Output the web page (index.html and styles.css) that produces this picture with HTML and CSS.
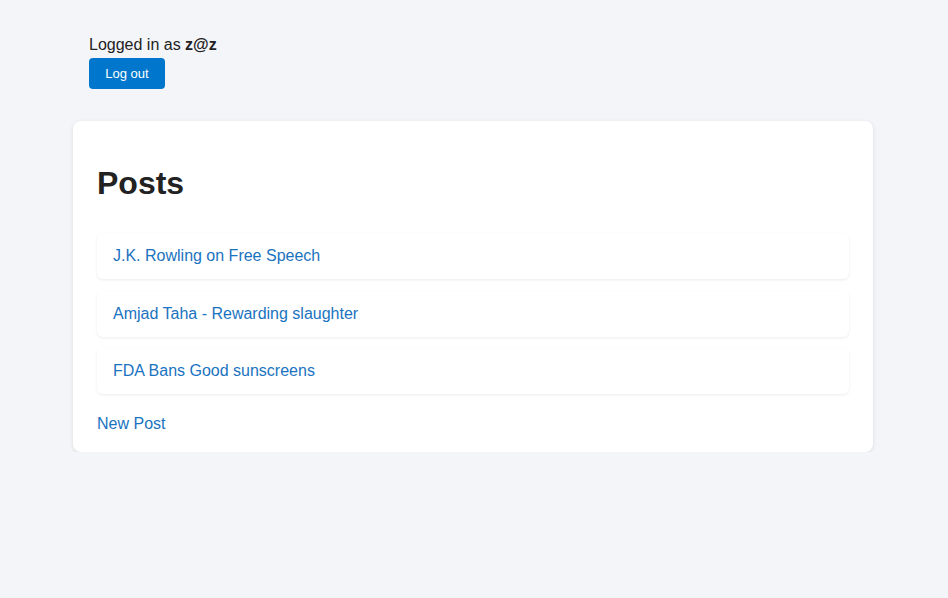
FILE: index.html
```html
<!DOCTYPE html>
<html>
<head>
<meta charset="utf-8">
<link rel="stylesheet" href="styles.css">
</head>
<body>
<div class="container">
  <div class="session">
    <div class="session-text">Logged in as <strong>z@z</strong></div>
    <button class="btn">Log out</button>
  </div>
  <div class="card">
    <h1 class="title">Posts</h1>
    <ul class="posts">
      <li class="post"><a href="#" class="link">J.K. Rowling on Free Speech</a></li>
      <li class="post"><a href="#" class="link">Amjad Taha - Rewarding slaughter</a></li>
      <li class="post"><a href="#" class="link">FDA Bans Good sunscreens</a></li>
    </ul>
    <a href="#" class="link new-post">New Post</a>
  </div>
</div>
</body>
</html>
```
FILE: styles.css
```css
html, body {
  margin: 0;
  padding: 0;
}
body {
  background: #f4f5f9;
  font-family: "Liberation Sans", Arial, sans-serif;
  font-size: 16px;
  color: #222;
  padding-right: 2px;
}
.container {
  max-width: 800px;
  margin: 0 auto;
  padding-top: 36px;
}
.session {
  padding: 0 16px;
  display: flex;
  flex-direction: column;
  align-items: flex-start;
  gap: 4px;
}
.session-text {
  line-height: 18px;
}
.btn {
  background: #0077cc;
  color: #fff;
  border: none;
  border-radius: 4px;
  font-family: "Liberation Sans", Arial, sans-serif;
  font-size: 13px;
  height: 31px;
  width: 76px;
  padding: 0;
  cursor: pointer;
}
.card {
  margin-top: 32px;
  background: #fff;
  border-radius: 8px;
  box-shadow: 0 1px 4px rgba(0, 0, 0, 0.1);
  padding: 24px 24px 19px;
}
.title {
  font-size: 32px;
  margin: 20px 0 31px;
  color: #222;
}
.posts {
  list-style: none;
  margin: 0 0 21px;
  padding: 0;
  display: flex;
  flex-direction: column;
  gap: 11.5px;
}
.post {
  padding: 14px 16px;
  border-radius: 6px;
  box-shadow: 0 1px 3px rgba(0, 0, 0, 0.08);
}
.link {
  color: #1a73c0;
  text-decoration: none;
}
.new-post {
  display: inline-block;
}
```
